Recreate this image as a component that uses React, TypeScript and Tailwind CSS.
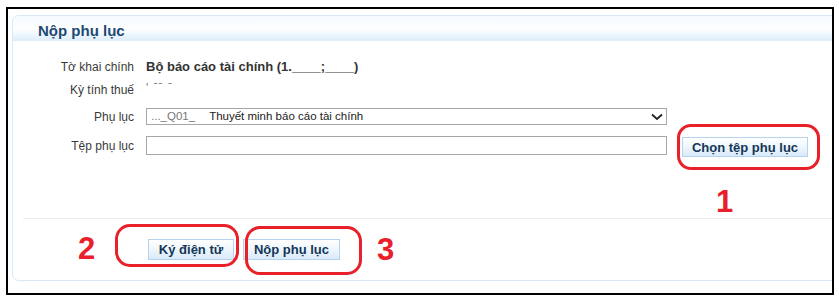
import React from "react";

const btn =
  "flex items-center justify-center border border-[#b5d3ee] bg-gradient-to-b from-[#ffffff] via-[#eef6fd] to-[#d9eafa] text-[13px] font-bold text-[#143657] leading-none";

export default function App() {
  return (
    <div
      className="relative w-[839px] h-[301px] bg-white pt-[7px] pl-[6px] overflow-hidden"
      style={{ fontFamily: '"Liberation Sans", Arial, sans-serif' }}
    >
      <div className="w-[828px] h-[288px] border-2 border-black pl-[4px] pt-[6px] overflow-hidden">
        <div className="w-[840px] h-[266px] border border-[#d7e8f8] rounded-[7px] flex flex-col">
          <div className="h-[25px] rounded-t-[7px] bg-gradient-to-b from-[#f3f9fe] via-[#ffffff] to-[#dcedfb] flex items-center pl-[25px] pt-[3px]">
            <span className="text-[15px] font-bold text-[#1d4a73] leading-none">Nộp phụ lục</span>
          </div>
          <div className="flex flex-col pt-[16px]">
            <div className="flex items-center h-[20px]">
              <div className="w-[121px] text-right text-[12px] text-[#3a3a3a]">Tờ khai chính</div>
              <div className="ml-[12px] text-[13px] font-bold text-[#333]">Bộ báo cáo tài chính (1.____;____)</div>
            </div>
            <div className="flex items-center h-[20px] mt-[3px]">
              <div className="w-[121px] text-right text-[12px] text-[#3a3a3a]">Kỳ tính thuế</div>
              <div className="ml-[12px] text-[12px] text-[#777] leading-none -mt-[5px] tracking-[1px]">' ˉˉ ˉ</div>
            </div>
            <div className="flex items-center h-[17px] mt-[8px]">
              <div className="w-[121px] text-right text-[12px] text-[#3a3a3a]">Phụ lục</div>
              <div className="ml-[12px] w-[521px] h-[17px] border border-[#a6a6a6] flex items-center pl-[4px] pr-[3px] text-[11.5px] text-[#222]">
                <span className="text-[#777]">..._Q01_</span>
                <span className="ml-[14px]">Thuyết minh báo cáo tài chính</span>
                <svg className="ml-auto" width="12" height="8" viewBox="0 0 12 8">
                  <path d="M1 1.5 L6 6 L11 1.5" fill="none" stroke="#222" strokeWidth="1.8" />
                </svg>
              </div>
            </div>
            <div className="flex items-start h-[21px] mt-[11px]">
              <div className="w-[121px] h-[19px] flex items-center justify-end text-[12px] text-[#3a3a3a]">Tệp phụ lục</div>
              <div className="ml-[12px] w-[521px] h-[19px] border border-[#a6a6a6] bg-white" />
              <div className={`${btn} ml-[15px] mt-[1px] w-[126px] h-[20px]`}>Chọn tệp phụ lục</div>
            </div>
          </div>
          <div className="mt-[61px] ml-[10px] h-px bg-[#ececec]" />
          <div className="flex mt-[20px] pl-[135px] gap-[9px]">
            <div className={`${btn} w-[86px] h-[21px]`}>Ký điện tử</div>
            <div className={`${btn} w-[97px] h-[21px]`}>Nộp phụ lục</div>
          </div>
        </div>
      </div>

      {/* red annotations */}
      <div className="absolute left-[677px] top-[124px] w-[143px] h-[46px] border-[3px] border-[#e8202a] rounded-[14px]" />
      <div className="absolute left-[115px] top-[224px] w-[124px] h-[43px] border-[3px] border-[#e8202a] rounded-[15px]" />
      <div className="absolute left-[245px] top-[226px] w-[117px] h-[49px] border-[3px] border-[#e8202a] rounded-[15px]" />
      <div className="absolute left-[716px] top-[186px] text-[31px] font-bold leading-none text-[#e8202a]">1</div>
      <div className="absolute left-[78px] top-[233px] text-[31px] font-bold leading-none text-[#e8202a]">2</div>
      <div className="absolute left-[377px] top-[234px] text-[31px] font-bold leading-none text-[#e8202a]">3</div>
    </div>
  );
}
